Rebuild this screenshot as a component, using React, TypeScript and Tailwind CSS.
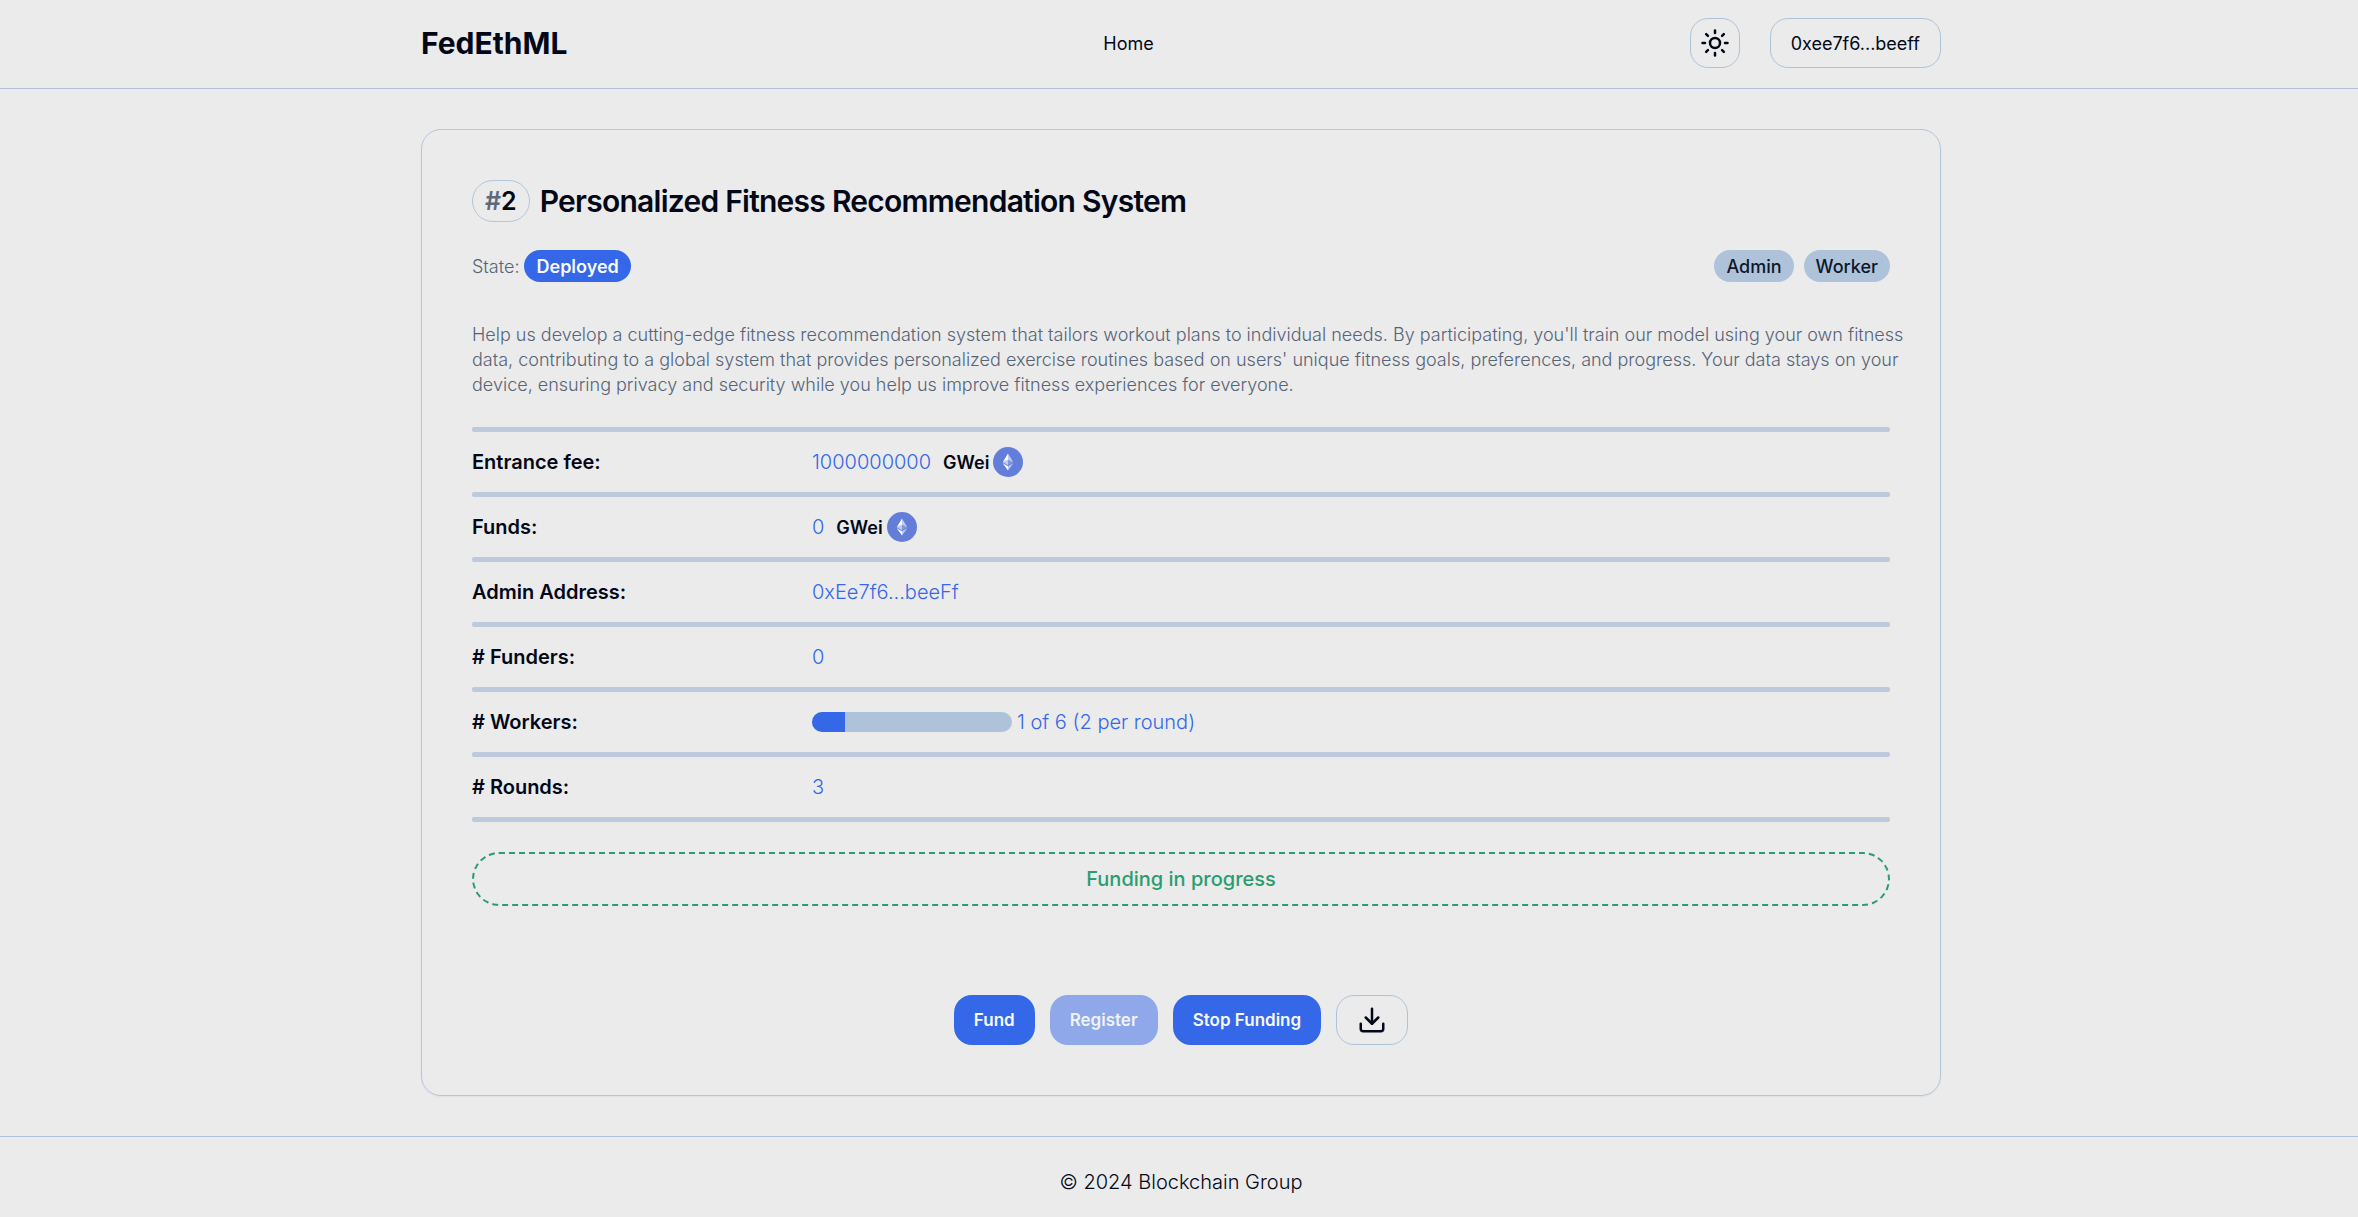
import type { ReactNode } from "react";
import { Download, Sun } from "lucide-react";

const outlineButton = "h-[50px] rounded-[18px] border border-[#aec3da]";
const primaryButton =
  "h-[50px] rounded-[18px] bg-[#3468e8] px-5 text-[17px] leading-[25px] font-semibold text-[#f8fafc] disabled:opacity-50";

function EthIcon() {
  return (
    <svg width="30" height="30" viewBox="0 0 32 32" aria-hidden="true">
      <circle cx="16" cy="16" r="16" fill="#627eda" />
      <g fill="#fff">
        <path fillOpacity=".6" d="M16 7v6.650l5.620 2.510z" />
        <path d="M16 7l-5.620 9.160L16 13.650z" />
        <path fillOpacity=".6" d="M16 20.480V25l5.620-7.780z" />
        <path d="M16 25v-4.520l-5.620-3.260z" />
        <path fillOpacity=".2" d="M16 19.430l5.620-3.270L16 13.650z" />
        <path fillOpacity=".6" d="M10.380 16.160L16 19.430v-5.780z" />
      </g>
    </svg>
  );
}

function Badge({ tone, children }: { tone: "primary" | "secondary"; children: ReactNode }) {
  const color =
    tone === "primary"
      ? "bg-[#3468e8] font-semibold text-[#f8fafc]"
      : "bg-[#aec3da] font-medium text-[#0f172a]";
  return (
    <span
      className={`inline-flex h-8 items-center rounded-full px-3 text-lg leading-[25px] ${color}`}
    >
      {children}
    </span>
  );
}

function Divider() {
  return <div className="h-[5px] rounded-[2px] bg-[#bccadc]" />;
}

function Amount({ value }: { value: string }) {
  return (
    <>
      {value}
      <span className="mr-1 ml-3 text-lg leading-[25px] font-semibold text-[#020817]">GWei</span>
      <EthIcon />
    </>
  );
}

const workers = { joined: 1, total: 6, perRound: 2 };

const rows: { label: string; value: ReactNode }[] = [
  { label: "Entrance fee:", value: <Amount value="1000000000" /> },
  { label: "Funds:", value: <Amount value="0" /> },
  { label: "Admin Address:", value: "0xEe7f6...beeFf" },
  { label: "# Funders:", value: "0" },
  {
    label: "# Workers:",
    value: (
      <>
        <span
          role="progressbar"
          aria-label="Workers"
          aria-valuemin={0}
          aria-valuemax={workers.total}
          aria-valuenow={workers.joined}
          className="mr-[5px] block h-5 w-[200px] overflow-hidden rounded-full bg-[#aec3da]"
        >
          <span
            className="block h-full bg-[#3468e8]"
            style={{ width: `${(workers.joined / workers.total) * 100}%` }}
          />
        </span>
        {`${workers.joined} of ${workers.total} (${workers.perRound} per round)`}
      </>
    ),
  },
  { label: "# Rounds:", value: "3" },
];

export default function App() {
  return (
    <div className="flex min-h-screen flex-col bg-[#ebebeb] font-['Inter',sans-serif] text-xl leading-[30px] font-light text-[#020817]">
      <header className="border-b border-[#aec3da] pt-[18px] pb-5 pl-1">
        <div className="mx-auto flex max-w-[1600px] items-center justify-between px-10">
          <a href="#" className="text-[30px] leading-[40px] font-bold">
            FedEthML
          </a>
          <nav>
            <a href="#" className="text-lg leading-[25px] font-normal">
              Home
            </a>
          </nav>
          <div className="flex items-center gap-[30px]">
            <button
              type="button"
              aria-label="Toggle theme"
              className={`flex w-[50px] items-center justify-center ${outlineButton}`}
            >
              <Sun size={30} />
            </button>
            <button
              type="button"
              className={`px-5 text-lg leading-[25px] font-normal ${outlineButton}`}
            >
              0xee7f6...beeff
            </button>
          </div>
        </div>
      </header>

      <main className="py-10 pl-1">
        <div className="mx-auto max-w-[1600px] px-10">
          <section className="rounded-[20px] border border-[#b4c6dc] p-[50px] shadow-xs">
            <div className="flex items-center gap-2.5">
              <span className="rounded-full border border-[#b4c6dc] px-3 py-[5px] text-[25px] leading-[30px] font-semibold">
                <span className="text-[#5b697d]">#</span>2
              </span>
              <h1 className="text-[30px] leading-[30px] font-semibold tracking-tight">
                Personalized Fitness Recommendation System
              </h1>
            </div>

            <div className="mt-7 flex items-center justify-between">
              <div className="flex items-center gap-[5px] text-lg leading-[25px] text-[#566478]">
                State:
                <Badge tone="primary">Deployed</Badge>
              </div>
              <div className="flex gap-2.5">
                <Badge tone="secondary">Admin</Badge>
                <Badge tone="secondary">Worker</Badge>
              </div>
            </div>

            <p className="mt-10 -mr-4 text-lg leading-[25px] text-[#566478]">
              Help us develop a cutting-edge fitness recommendation system that tailors workout
              plans to individual needs. By participating, you'll train our model using your own
              fitness data, contributing to a global system that provides personalized exercise
              routines based on users' unique fitness goals, preferences, and progress. Your data
              stays on your device, ensuring privacy and security while you help us improve fitness
              experiences for everyone.
            </p>

            <div className="mt-[30px]">
              <Divider />
              <dl>
                {rows.map((row) => (
                  <div key={row.label}>
                    <div className="flex h-[60px] items-center">
                      <dt className="w-[340px] shrink-0 font-semibold">{row.label}</dt>
                      <dd className="flex items-center text-[#3468e8]">{row.value}</dd>
                    </div>
                    <Divider />
                  </div>
                ))}
              </dl>
            </div>

            <p className="mt-[30px] rounded-full border-2 border-dashed border-[#2a9d6e] py-2.5 text-center font-medium text-[#2a9d6e]">
              Funding in progress
            </p>

            <div className="mt-[89px] flex justify-center gap-[15px]">
              <button type="button" className={primaryButton}>
                Fund
              </button>
              <button type="button" disabled className={primaryButton}>
                Register
              </button>
              <button type="button" className={primaryButton}>
                Stop Funding
              </button>
              <button
                type="button"
                aria-label="Download"
                className={`flex items-center px-5 ${outlineButton}`}
              >
                <Download size={30} />
              </button>
            </div>
          </section>
        </div>
      </main>

      <footer className="border-t border-[#aec3da] pt-[30px] pb-5 pl-1 text-center">
        © 2024 Blockchain Group
      </footer>
    </div>
  );
}
